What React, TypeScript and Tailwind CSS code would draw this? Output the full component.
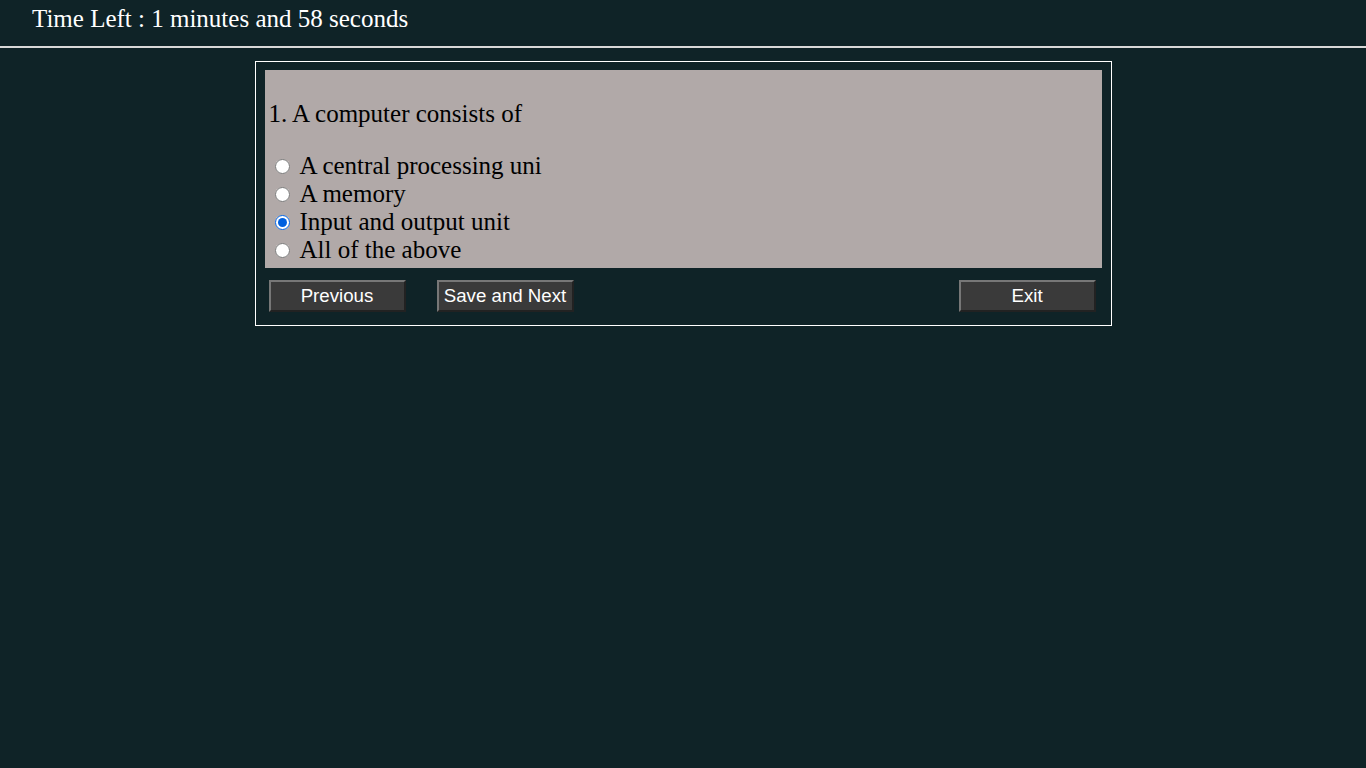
import React, { useState } from 'react';

const options = ['A central processing uni', 'A memory', 'Input and output unit', 'All of the above'];

export default function App() {
  const [picked, setPicked] = useState(2);

  const btn =
    "h-[32px] w-[137px] bg-[#3a3a3a] text-white text-[18.7px] font-['Liberation_Sans',Arial,sans-serif] border-2 border-t-[#777] border-l-[#777] border-b-[#222] border-r-[#222] leading-none";

  return (
    <div className="min-h-screen bg-[#0f2327] font-['Liberation_Serif','Times_New_Roman',serif]">
      {/* Timer bar */}
      <div className="h-[48px] border-b-2 border-[#d8d8d8] pl-[32px] pt-[4px] text-[25px] leading-[29px] text-white">
        Time Left : 1 minutes and 58 seconds
      </div>

      <div className="flex justify-center pt-[13px]">
        <div className="w-[857px] border border-white px-[9px] pt-[8px] pb-[13px]">
          <div className="bg-[#b1a9a8] pt-[30px] pb-[4px] text-[25px] text-black">
            <p className="pl-[4px] leading-[27px]">1. A computer consists of</p>
            <div className="mt-[25px]">
              {options.map((opt, i) => (
                <label key={i} className="flex h-[28px] items-center">
                  <input
                    type="radio"
                    name="q1"
                    checked={picked === i}
                    onChange={() => setPicked(i)}
                    className="ml-[10px] mr-[10px] h-[15px] w-[15px] accent-[#0060df]"
                  />
                  <span className="leading-[28px]">{opt}</span>
                </label>
              ))}
            </div>
          </div>

          <div className="mt-[12px] flex items-center pl-[4px] pr-[6px]">
            <button className={btn}>Previous</button>
            <button className={`${btn} ml-[31px]`}>Save and Next</button>
            <button className={`${btn} ml-auto`}>Exit</button>
          </div>
        </div>
      </div>
    </div>
  );
}
